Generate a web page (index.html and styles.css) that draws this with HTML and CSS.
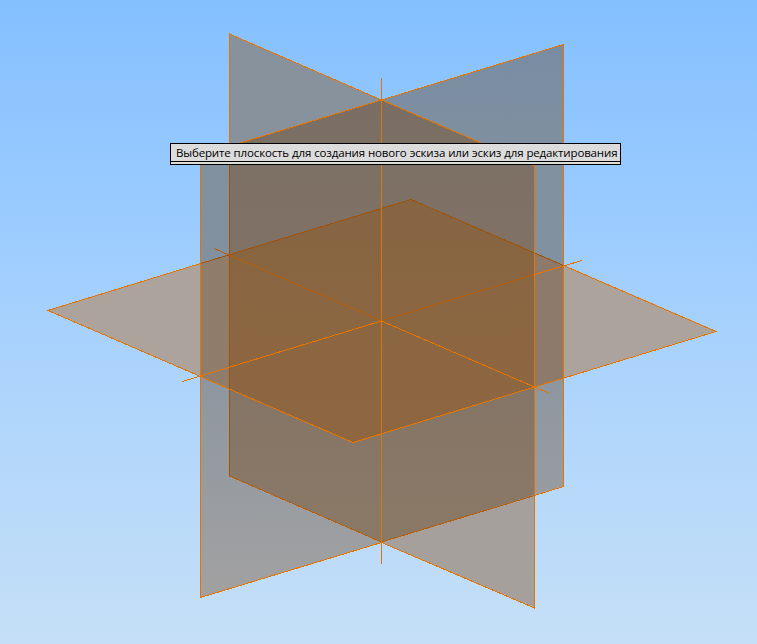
FILE: index.html
```
<!DOCTYPE html>
<html lang="ru">
<head>
<meta charset="utf-8">
<title>Эскиз</title>
<link rel="stylesheet" href="styles.css">
</head>
<body>
<main class="viewport">
  <svg class="scene" viewBox="0 0 757 644" width="757" height="644" aria-hidden="true">
    <defs>
      <linearGradient id="core" gradientUnits="userSpaceOnUse" x1="0" y1="100" x2="0" y2="542">
        <stop offset="0" stop-color="#7a6e64"/><stop offset="1" stop-color="#8b7967"/>
      </linearGradient>
      <linearGradient id="side" gradientUnits="userSpaceOnUse" x1="0" y1="44" x2="0" y2="597">
        <stop offset="0" stop-color="#788ca3"/><stop offset=".2" stop-color="#80909f"/><stop offset=".4" stop-color="#8291a0"/><stop offset="1" stop-color="#a2a1a1"/>
      </linearGradient>
      <linearGradient id="overlap" gradientUnits="userSpaceOnUse" x1="0" y1="199" x2="0" y2="442">
        <stop offset="0" stop-color="#876542"/><stop offset="1" stop-color="#8e6741"/>
      </linearGradient>
    </defs>
    <!-- plane fills -->
    <path fill="#88929d" d="M229.500 34L381.500 100L229.500 146Z"/>
    <path fill="url(#side)" d="M381.500 100L564 44V486L534.500 495V166Z"/>
    <path fill="url(#side)" d="M200.500 155L229.500 146V476L381.500 542.500L200.500 597.500Z"/>
    <path fill="#a5a09b" d="M381.500 542.500L534.500 495V607.500Z"/>
    <path fill="#aca39d" d="M48 310L200.500 263.500V376.500Z"/>
    <path fill="#aca39d" d="M563.500 265L716 331L563.500 378Z"/>
    <path fill="#8f7c6b" d="M200.500 263.500L229.500 254.500V389L200.500 376.500Z"/>
    <path fill="#8e7a6a" d="M534.500 252.500L563.500 265V378L534.500 387Z"/>
    <path fill="url(#core)" d="M229.500 146L381.500 100L534.500 166V495L381.500 542.500L229.500 476Z"/>
    <path fill="url(#overlap)" d="M229.500 254.500L411 199.500L534.500 252.500V387L353 442.500L229.500 389Z"/>
    <!-- hidden edges -->
    <g class="edge edge-deep">
      <path d="M200.500 263.500L411 199.500L563.500 265.500"/>
      <path d="M229.500 146V476"/>
    </g>
    <g class="edge edge-dim">
      <path d="M229.500 476L381.500 542L534.500 495.500"/>
      <path d="M214 248.500L381.500 321L534.500 274.500"/>
    </g>
    <!-- visible edges -->
    <g class="edge">
      <path d="M229.500 146V34L381.500 100L534.500 166"/>
      <path d="M200.500 155L381.500 100L563.500 44.500V486.500L534.500 495.500"/>
      <path d="M200.500 155V597.500L381.500 542.500L534.500 608V166"/>
      <path d="M200.500 263.500L48 310.500L353 442.500L716 331.500L563.500 265.500"/>
      <path d="M182.500 381.500L381.500 321L549.500 393.500"/>
      <path d="M534.500 274.500L582 260.500"/>
    </g>
    <path class="edge edge-axis" d="M381.500 78V564"/>
  </svg>
  <div class="tooltip" role="tooltip"><span class="tooltip-text">Выберите плоскость для создания нового эскиза или эскиз для редактирования</span></div>
</main>
</body>
</html>
```
FILE: styles.css
```
body {
  margin: 0;
}

.viewport {
  position: relative;
  width: 757px;
  height: 644px;
  overflow: hidden;
  background: linear-gradient(#84c0ff, #98caff 30%, #acd4fc 58%, #c5dff7);
}

.scene {
  display: block;
}

.edge {
  fill: none;
  stroke: #e87400;
  stroke-width: 1;
  shape-rendering: crispEdges;
}

.edge-dim {
  stroke: #b95e05;
}

.edge-deep {
  stroke: #9f5208;
}

.edge-axis {
  stroke: #dc7710;
}

.tooltip {
  position: absolute;
  left: 170px;
  top: 143px;
  box-sizing: border-box;
  width: 451px;
  height: 22px;
  padding-left: 5px;
  border: 1px solid #000;
  background: linear-gradient(#dcdcdc 0 17px, #000 17px 18px, #dcdfd6 18px);
}

.tooltip-text {
  display: block;
  font: 11.5px/18px "Open Sans", "Noto Sans", sans-serif;
  letter-spacing: -0.15px;
  word-spacing: 0.2px;
  color: #000;
  white-space: nowrap;
}
```
